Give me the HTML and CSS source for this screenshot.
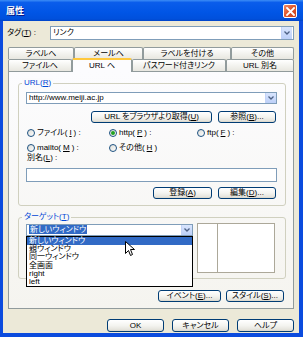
FILE: index.html
```html
<!DOCTYPE html>
<html lang="ja">
<head>
<meta charset="utf-8">
<title>属性</title>
<link rel="stylesheet" href="styles.css">
</head>
<body>
<div class="win">
  <div class="titlebar">
    <span class="title">属性</span>
    <span class="close"><svg width="9" height="9" viewBox="0 0 9 9"><path d="M1 1 L8 8 M8 1 L1 8" stroke="#fff" stroke-width="1.8" stroke-linecap="square"/></svg></span>
  </div>
  <div class="client">
    <div class="tagrow">
      <span class="tag-label">タグ(<u>T</u>) :</span>
      <div class="combo tag-combo">
        <span class="combo-text">リンク</span>
        <span class="drop"><svg width="6" height="4" viewBox="0 0 6 4"><path d="M0.5 0.5 L3 3 L5.5 0.5" fill="none" stroke="#4D6185" stroke-width="1.3"/></svg></span>
      </div>
    </div>

    <div class="tabs">
      <div class="tabrow back">
        <span class="tab t-a">ラベルへ</span>
        <span class="tab t-b">メールへ</span>
        <span class="tab t-c">ラベルを付ける</span>
        <span class="tab t-d">その他</span>
      </div>
      <div class="tabrow front">
        <span class="tab t-e">ファイルへ</span>
        <span class="tab t-f sel">URL へ</span>
        <span class="tab t-g">パスワード付きリンク</span>
        <span class="tab t-h">URL 別名</span>
      </div>
    </div>

    <div class="panel">
      <div class="group url-group">
        <span class="legend">URL(<u>R</u>)</span>
        <div class="combo url-combo">
          <span class="combo-text">http://www.meiji.ac.jp</span>
          <span class="drop"><svg width="6" height="4" viewBox="0 0 6 4"><path d="M0.5 0.5 L3 3 L5.5 0.5" fill="none" stroke="#4D6185" stroke-width="1.3"/></svg></span>
        </div>
        <div class="btnrow url-btns">
          <span class="btn b-get">URL をブラウザより取得(<u>U</u>)</span>
          <span class="btn b-ref">参照(<u>B</u>)...</span>
        </div>
        <div class="radios">
          <span class="radio"><span class="rb"></span>ファイル(<u>I</u>) :</span>
          <span class="radio"><span class="rb on"></span>http(<u>P</u>) :</span>
          <span class="radio"><span class="rb"></span>ftp(<u>F</u>) :</span>
          <span class="radio"><span class="rb"></span>mailto(<u>M</u>) :</span>
          <span class="radio"><span class="rb"></span>その他(<u>H</u>)</span>
        </div>
        <div class="alias-label">別名(<u>L</u>) :</div>
        <div class="textbox"></div>
        <div class="btnrow reg-btns">
          <span class="btn b-reg">登録(<u>A</u>)</span>
          <span class="btn b-edit">編集(<u>D</u>)...</span>
        </div>
      </div>

      <div class="group target-group">
        <span class="legend">ターゲット(<u>T</u>)</span>
        <div class="target-row">
          <div class="combo-wrap">
            <div class="combo target-combo">
              <span class="combo-text"><span class="hl">新しいウィンドウ</span></span>
              <span class="drop"><svg width="6" height="4" viewBox="0 0 6 4"><path d="M0.5 0.5 L3 3 L5.5 0.5" fill="none" stroke="#4D6185" stroke-width="1.3"/></svg></span>
            </div>
            <ul class="droplist">
              <li class="cur">新しいウィンドウ</li>
              <li>親ウィンドウ</li>
              <li>同一ウィンドウ</li>
              <li>全画面</li>
              <li>right</li>
              <li>left</li>
            </ul>
            <svg class="cursor" width="11" height="17" viewBox="0 0 11 17"><path d="M0.5 0.5 L0.5 12.5 L3.5 9.5 L5.5 14.5 L7.5 13.5 L5.5 8.5 L9.5 8.5 Z" fill="#fff" stroke="#000" stroke-width="1"/></svg>
          </div>
          <div class="framebox"><div class="framecol"></div></div>
        </div>
      </div>

      <div class="btnrow ev-btns">
        <span class="btn b-ev">イベント(<u>E</u>)...</span>
        <span class="btn b-st">スタイル(<u>S</u>)...</span>
      </div>
    </div>

    <div class="btnrow dlgbtns">
      <span class="btn b-dlg">OK</span>
      <span class="btn b-dlg">キャンセル</span>
      <span class="btn b-dlg">ヘルプ</span>
    </div>
  </div>
</div>
</body>
</html>
```

FILE: styles.css
```css
* { box-sizing: border-box; margin: 0; padding: 0; }
html, body { width: 303px; height: 337px; overflow: hidden; background: #fff; }
body {
  font-family: "Liberation Sans", "Noto Sans CJK JP", sans-serif;
  font-size: 8px;
  line-height: 1;
  color: #000;
  font-feature-settings: "palt";
}
u { text-decoration: underline; text-underline-offset: 1px; }

.win {
  width: 303px; height: 337px;
  background: #0B4BDE;
  display: flex; flex-direction: column;
}

.titlebar {
  height: 21px; flex: none;
  background: linear-gradient(to bottom, #3C8DF6 0%, #0A5DEB 12%, #0055E5 60%, #0050DC 90%, #0044C8 100%);
  display: flex; align-items: center; justify-content: space-between;
  padding: 1px 6px 0 6px;
}
.title {
  color: #fff; font-weight: bold; font-size: 9px;
  text-shadow: 1px 1px 0 #0A1883;
}
.close {
  width: 14px; height: 14px;
  border: 1px solid #fff; border-radius: 2px;
  background: linear-gradient(135deg, #F08A68 0%, #E05A30 45%, #C8401A 100%);
  display: flex; align-items: center; justify-content: center;
}

.client {
  flex: 1;
  margin: 0 4px 4px 3px;
  background: #ECE9D8;
  padding: 5px 5px 0 4px;
  display: flex; flex-direction: column;
}

.tagrow { display: flex; align-items: center; height: 14px; flex: none; }
.tag-label { width: 43px; }

.combo {
  border: 1px solid #7F9DB9; background: #fff;
  display: flex; align-items: center; justify-content: space-between;
  flex: none;
}
.combo-text { padding-left: 2px; white-space: nowrap; }
.drop {
  width: 11px; height: 100%;
  background: linear-gradient(to bottom, #D9E5FD, #BDD0F8);
  border-left: 1px solid #C3D3F8;
  display: flex; align-items: center; justify-content: center;
}
.tag-combo { flex: 1; height: 14px; }
.tag-combo .drop { height: 12px; margin-right: 1px; }

.tabs { margin: 7px 0 0 1px; display: flex; flex-direction: column; flex: none; }
.tabrow { display: flex; align-items: flex-end; }
.tab {
  height: 12px;
  border: 1px solid #919B9C; border-bottom: none;
  border-radius: 2px 2px 0 0;
  background: linear-gradient(to bottom, #FFFFFF, #F3F3EF 50%, #E8E7E0);
  display: flex; align-items: center; justify-content: center;
  white-space: nowrap;
}
.front { margin-top: -1px; position: relative; z-index: 1; }
.tab.sel {
  height: 14px; margin-bottom: -1px;
  background: #FCFCFE;
  border-top: 2px solid #FFC83C;
  position: relative; z-index: 2;
}
.t-a { width: 66px; } .t-b { width: 69px; } .t-c { width: 88px; } .t-d { width: 63px; }
.t-e { width: 64px; } .t-f { width: 60px; } .t-g { width: 94px; } .t-h { width: 68px; }

.panel {
  margin-left: 1px;
  height: 238px; flex: none;
  border: 1px solid #919B9C;
  background: linear-gradient(to bottom, #FCFCFE, #F5F4EF);
  padding: 11px 7px 6px 9px;
  display: flex; flex-direction: column;
}

.group {
  position: relative;
  border: 1px solid #D0D0BF; border-radius: 3px;
  padding: 8px 8px 0 7px;
  display: flex; flex-direction: column;
  flex: none;
}
.legend {
  position: absolute; left: 3px; top: -6px;
  color: #0046D5; line-height: 10px; height: 10px;
  padding: 0 2px;
  background: #F8F8F6;
}
.url-group { height: 123px; }
.url-group .legend { background: #FBFBFC; }

.url-combo { height: 12px; }
.url-combo .drop { height: 10px; }

.btnrow { display: flex; justify-content: flex-end; flex: none; }
.btn {
  height: 12px;
  border: 1px solid #003C74; border-radius: 3px;
  background: linear-gradient(to bottom, #FFFFFF 0%, #F4F4F0 50%, #E6E5DE 85%, #D8D4C8 100%);
  display: flex; align-items: center; justify-content: center;
  white-space: nowrap;
}
.url-btns { margin-top: 7px; gap: 6px; padding-right: 1px; }
.b-get { width: 121px; }
.b-ref { width: 58px; }

.radios {
  display: grid; grid-template-columns: 82px 88px 1fr;
  grid-auto-rows: 11px;
  row-gap: 4px; margin-top: 4px; padding-left: 1px;
  flex: none;
}
.radio { display: flex; align-items: center; gap: 2px; height: 11px; white-space: nowrap; }
.rb {
  width: 8px; height: 8px; border-radius: 50%;
  border: 1px solid #1C5180;
  background: linear-gradient(135deg, #DCDCD7, #FFFFFF);
  display: flex; align-items: center; justify-content: center;
}
.rb.on::after {
  content: ""; width: 4px; height: 4px; border-radius: 50%;
  background: #21A121;
}

.alias-label { height: 10px; line-height: 10px; padding-left: 1px; flex: none; }
.textbox { margin-top: 5px; height: 14px; border: 1px solid #7F9DB9; background: #fff; flex: none; }
.reg-btns { margin-top: 5px; gap: 6px; padding-right: 1px; }
.b-reg { width: 59px; }
.b-edit { width: 58px; }

.target-group { margin-top: 11px; height: 62px; padding-top: 5px; }
.target-row { display: flex; gap: 4px; height: 50px; flex: none; }
.combo-wrap { width: 167px; position: relative; }
.target-combo { height: 12px; margin-top: 1px; }
.target-combo .drop { height: 10px; }
.hl { background: #316AC5; color: #fff; padding: 0 1px; }

.droplist {
  position: absolute; left: 0; top: 13px;
  width: 167px; height: 51px;
  border: 1px solid #000; background: #fff;
  list-style: none; z-index: 5;
}
.droplist li { height: 8.2px; line-height: 8.2px; padding-left: 2px; white-space: nowrap; }
.droplist li.cur { background: #316AC5; color: #fff; }
.cursor { position: absolute; left: 99px; top: 18px; z-index: 6; }

.framebox {
  width: 78px; height: 50px;
  border: 1px solid #ACA899; background: #fff;
  display: flex;
}
.framecol { width: 20px; border-right: 1px solid #ACA899; }

.ev-btns { margin-top: auto; gap: 5px; padding-right: 2px; }
.b-ev { width: 63px; }
.b-st { width: 58px; }

.dlgbtns { margin-top: 10px; gap: 8px; }
.b-dlg { width: 57px; height: 13px; }
```
